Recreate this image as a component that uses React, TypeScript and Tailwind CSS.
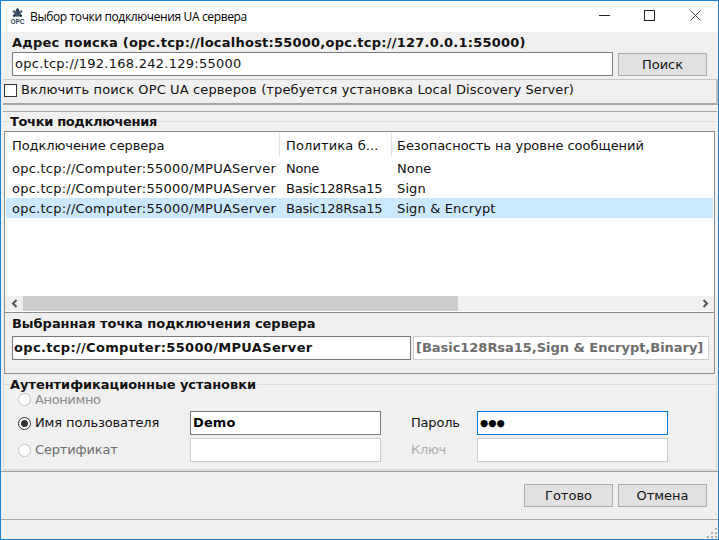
const sans = "font-['DejaVu_Sans',sans-serif]"

const rows = [
  { url: "opc.tcp://Computer:55000/MPUAServer", policy: "None", mode: "None" },
  { url: "opc.tcp://Computer:55000/MPUAServer", policy: "Basic128Rsa15", mode: "Sign" },
  { url: "opc.tcp://Computer:55000/MPUAServer", policy: "Basic128Rsa15", mode: "Sign & Encrypt", selected: true },
]

const Logo = () => (
  <svg width="17" height="16" viewBox="0 0 17 16" className="shrink-0">
    <circle cx="8.5" cy="5.5" r="3.2" fill="#3d4f63" />
    <circle cx="8.5" cy="1.8" r="1.5" fill="#1f2f42" />
    <circle cx="5" cy="3.6" r="1.4" fill="#50677f" />
    <circle cx="12" cy="3.6" r="1.4" fill="#50677f" />
    <circle cx="5.2" cy="7.8" r="1.3" fill="#1f2f42" />
    <circle cx="11.8" cy="7.8" r="1.3" fill="#1f2f42" />
    <text x="8.5" y="15.5" textAnchor="middle" fontSize="6.5" fontWeight="700" fontFamily="Liberation Sans, sans-serif" fill="#33475c">OPC</text>
  </svg>
)

const Radio = ({ checked, disabled }: { checked?: boolean; disabled?: boolean }) => (
  <span className={`w-[13px] h-[13px] rounded-full border bg-white flex items-center justify-center shrink-0 ${disabled ? "border-[#c4c4c4]" : "border-[#333]"}`}>
    {checked && <span className="w-[7px] h-[7px] rounded-full bg-[#333]" />}
  </span>
)

const WinButton = ({ label }: { label: string }) => (
  <button className="w-[89px] h-[23px] pt-[1px] bg-[#e1e1e1] border border-[#adadad] text-[13px] text-[#111]">
    {label}
  </button>
)

export default function App() {
  return (
    <div className={`w-[719px] h-[540px] flex flex-col border border-[#1883d7] bg-[#f0f0f0] overflow-hidden text-[13px] leading-4 text-[#111] ${sans}`}>
      {/* title bar */}
      <div className="h-[31px] shrink-0 bg-white flex items-center pl-[8px]">
        <div className="pb-[2px]"><Logo /></div>
        <span className="ml-[4px] text-[12px] tracking-[-0.37px] font-['Open_Sans',sans-serif] text-black">Выбор точки подключения UA сервера</span>
        <div className="ml-auto flex items-center pb-[3px]">
          <span className="w-[45px] flex justify-center">
            <svg width="11" height="11" viewBox="0 0 11 11"><path d="M0 5.5h11" stroke="#222" shapeRendering="crispEdges" /></svg>
          </span>
          <span className="w-[45px] flex justify-center">
            <svg width="11" height="11" viewBox="0 0 11 11"><rect x="0.5" y="0.5" width="10" height="10" fill="none" stroke="#222" shapeRendering="crispEdges" /></svg>
          </span>
          <span className="w-[46px] flex justify-center">
            <svg width="11" height="11" viewBox="0 0 11 11"><path d="M0.5 0.5l10 10M10.5 0.5l-10 10" fill="none" stroke="#222" strokeWidth="0.9" /></svg>
          </span>
        </div>
      </div>

      {/* search */}
      <div className="h-[47px] shrink-0 pl-[11px] pr-[11px] pt-[2px]">
        <div className="font-bold leading-[17px] h-[18px] tracking-[0.23px]">Адрес поиска (opc.tcp://localhost:55000,opc.tcp://127.0.0.1:55000)</div>
        <div className="flex items-center gap-[5px]">
          <div className="w-[601px] h-[24px] bg-white border border-[#7a7a7a] pl-[2px] flex items-center tracking-[0.26px]">opc.tcp://192.168.242.129:55000</div>
          <WinButton label="Поиск" />
        </div>
      </div>

      {/* discovery checkbox */}
      <div className="h-[26px] shrink-0 ml-[2px] border-t border-[#c8c8c8] border-b-2 border-b-[#a6a6a6] border-r-2 border-r-[#c0c0c0] flex items-center pl-[1px] pb-[3px] gap-[4px]">
        <span className="w-[13px] h-[13px] bg-white border border-[#333] shrink-0" />
        <span className="tracking-[0.12px]">Включить поиск OPC UA серверов (требуется установка Local Discovery Server)</span>
      </div>

      {/* endpoints */}
      <div className="h-[263px] shrink-0 mt-[6px] ml-[2px] mr-[1px] border-t border-t-[#a8a8a8] flex flex-col">
        <div className="h-[19px] shrink-0 relative">
          <div className="absolute left-0 right-0 top-[9px] border-t border-[#dcdcdc]" />
          <div className="absolute left-[7px] top-[1px] bg-[#f0f0f0] pr-[1px] font-bold leading-[17px] tracking-[-0.34px]">Точки подключения</div>
        </div>
        <div className="flex-1 ml-[1px] mr-[2px] border border-t-0 border-[#8f8f8f] flex flex-col">
          <div className="h-[182px] shrink-0 bg-white border-t border-b border-[#8f8f8f] flex flex-col">
            <div className="h-[24px] shrink-0 mt-[1px] flex items-center">
              <div className="w-[275px] h-full pl-[7px] pt-[1px] flex items-center border-r border-[#e5e5e5] tracking-[-0.08px]">Подключение сервера</div>
              <div className="w-[112px] h-full pl-[6px] pt-[1px] flex items-center border-r border-[#e5e5e5] tracking-[0.13px]">Политика б...</div>
              <div className="pl-[5px] pt-[1px] tracking-[-0.03px]">Безопасность на уровне сообщений</div>
            </div>
            <div className="mt-[1px] flex-1 px-[1px]">
              {rows.map((r, i) => (
                <div key={i} className={`h-[20px] pt-[1px] flex items-center ${r.selected ? "bg-[#cce8ff]" : ""}`}>
                  <div className="w-[274px] pl-[6px] whitespace-nowrap tracking-[0.24px]">{r.url}</div>
                  <div className="w-[112px] pl-[6px] tracking-[-0.25px]">{r.policy}</div>
                  <div className="pl-[5px] tracking-[0.13px]">{r.mode}</div>
                </div>
              ))}
            </div>
            <div className="h-[15px] shrink-0 bg-[#f0f0f0] flex items-center justify-between mb-[1px]">
              <span className="w-[18px] flex justify-center">
                <svg width="7" height="9" viewBox="0 0 7 9"><path d="M5.5 1L2 4.5 5.5 8" fill="none" stroke="#505050" strokeWidth="2" /></svg>
              </span>
              <div className="flex-1 h-full">
                <div className="w-[435px] h-full bg-[#cdcdcd]" />
              </div>
              <span className="w-[18px] flex justify-center">
                <svg width="7" height="9" viewBox="0 0 7 9"><path d="M1.5 1L5 4.5 1.5 8" fill="none" stroke="#505050" strokeWidth="2" /></svg>
              </span>
            </div>
          </div>
          <div className="pl-[7px] pt-[2px] font-bold leading-[17px] h-[23px] tracking-[-0.04px]">Выбранная точка подключения сервера</div>
          <div className="flex ml-[7px] gap-[2px]">
            <div className="w-[399px] h-[24px] bg-white border border-[#7a7a7a] pl-[1px] flex items-center font-bold tracking-[0.33px]">opc.tcp://Computer:55000/MPUAServer</div>
            <div className="w-[296px] h-[24px] bg-white border border-[#cccccc] pl-[2px] flex items-center font-bold text-[#6d6d6d] tracking-[-0.03px] whitespace-nowrap">[Basic128Rsa15,Sign &amp; Encrypt,Binary]</div>
          </div>
        </div>
      </div>

      {/* authentication */}
      <div className="h-[96px] shrink-0 ml-[2px] mr-[1px] mt-[1px] border-x border-b-2 border-[#dcdcdc] relative">
        <div className="absolute left-0 right-0 top-[9px] border-t border-[#dcdcdc]" />
        <div className="absolute left-[6px] top-[1px] font-bold leading-[17px] bg-[#f0f0f0] pr-[1px] tracking-[-0.05px]">Аутентификационные установки</div>
        <div className="pt-[16px] pl-[14px] flex flex-col">
          <div className="h-[17px] flex items-center gap-[4px] text-[#8a8a8a] tracking-[-0.37px]">
            <Radio disabled />
            <span>Анонимно</span>
          </div>
          <div className="flex items-center h-[24px] mt-[3px]">
            <Radio checked />
            <span className="ml-[4px] w-[155px] tracking-[-0.12px]">Имя пользователя</span>
            <div className="w-[191px] h-[24px] bg-white border border-[#7a7a7a] pl-[2px] flex items-center font-bold text-black tracking-[0.13px]">Demo</div>
            <span className="ml-[30px] w-[66px] tracking-[-0.2px]">Пароль</span>
            <div className="w-[191px] h-[24px] bg-white border border-[#0078d7] pl-[2px] flex items-center font-bold text-black text-[9.5px]">●●●</div>
          </div>
          <div className="flex items-center h-[24px] mt-[3px]">
            <Radio disabled />
            <span className="ml-[4px] w-[155px] text-[#6d6d6d] tracking-[-0.17px]">Сертификат</span>
            <div className="w-[191px] h-[24px] bg-white border border-[#cccccc]" />
            <span className="ml-[30px] w-[66px] text-[#adadad] tracking-[-0.3px]">Ключ</span>
            <div className="w-[191px] h-[24px] bg-white border border-[#cccccc]" />
          </div>
        </div>
      </div>

      {/* footer */}
      <div className="h-[48px] shrink-0 border-t border-[#a0a0a0] flex justify-end items-start pt-[12px] pr-[11px] gap-[5px]">
        <WinButton label="Готово" />
        <WinButton label="Отмена" />
      </div>

      {/* status bar */}
      <div className="flex-1 border-t border-[#a8a8a8] relative">
        <svg width="12" height="12" viewBox="0 0 12 12" className="absolute right-0 bottom-0">
          <g fill="#b5b5b5">
            <rect x="9" y="1" width="2" height="2" />
            <rect x="5" y="5" width="2" height="2" />
            <rect x="9" y="5" width="2" height="2" />
            <rect x="1" y="9" width="2" height="2" />
            <rect x="5" y="9" width="2" height="2" />
            <rect x="9" y="9" width="2" height="2" />
          </g>
        </svg>
      </div>
    </div>
  )
}
